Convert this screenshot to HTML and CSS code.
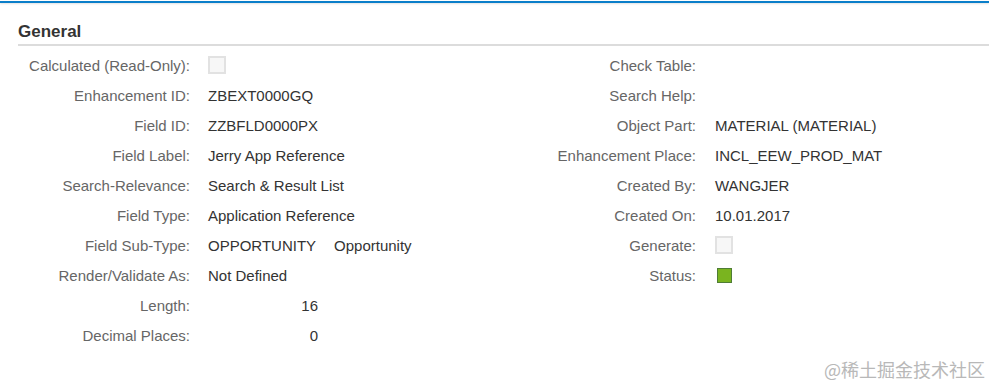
FILE: index.html
```html
<!DOCTYPE html>
<html>
<head>
<meta charset="utf-8">
<link rel="stylesheet" href="styles.css">
</head>
<body>
<div class="topbar"></div>
<div class="panel">
  <h2 class="title">General</h2>
  <div class="form">
    <div class="col col-left">
      <div class="label">Calculated (Read-Only):</div><div class="value"><span class="checkbox"></span></div>
      <div class="label">Enhancement ID:</div><div class="value">ZBEXT0000GQ</div>
      <div class="label">Field ID:</div><div class="value">ZZBFLD0000PX</div>
      <div class="label">Field Label:</div><div class="value">Jerry App Reference</div>
      <div class="label">Search-Relevance:</div><div class="value">Search &amp; Result List</div>
      <div class="label">Field Type:</div><div class="value">Application Reference</div>
      <div class="label">Field Sub-Type:</div><div class="value"><span class="code">OPPORTUNITY</span><span class="desc">Opportunity</span></div>
      <div class="label">Render/Validate As:</div><div class="value">Not Defined</div>
      <div class="label">Length:</div><div class="value"><span class="num">16</span></div>
      <div class="label">Decimal Places:</div><div class="value"><span class="num">0</span></div>
    </div>
    <div class="col col-right">
      <div class="label">Check Table:</div><div class="value"></div>
      <div class="label">Search Help:</div><div class="value"></div>
      <div class="label">Object Part:</div><div class="value">MATERIAL (MATERIAL)</div>
      <div class="label">Enhancement Place:</div><div class="value">INCL_EEW_PROD_MAT</div>
      <div class="label">Created By:</div><div class="value">WANGJER</div>
      <div class="label">Created On:</div><div class="value">10.01.2017</div>
      <div class="label">Generate:</div><div class="value"><span class="checkbox"></span></div>
      <div class="label">Status:</div><div class="value"><span class="status"></span></div>
    </div>
  </div>
</div>
<div class="watermark">@稀土掘金技术社区</div>
</body>
</html>
```
FILE: styles.css
```css
html, body {
  margin: 0;
  padding: 0;
  background: #fff;
  width: 989px;
  height: 384px;
  overflow: hidden;
  font-family: "Liberation Sans", Arial, sans-serif;
  position: relative;
}
.topbar {
  margin-top: 1px;
  height: 2px;
  background: #0a7ec9;
  box-shadow: 0 1px 2px rgba(0,0,0,0.12);
}
.panel {
  padding-left: 18px;
}
.title {
  margin: 0;
  padding-top: 17px;
  height: 24px;
  line-height: 24px;
  font-size: 17px;
  font-weight: bold;
  color: #333;
  border-bottom: 2px solid #dcdcdc;
  box-sizing: content-box;
}
.form {
  display: flex;
  padding-top: 4px;
}
.col {
  display: grid;
  grid-auto-rows: 30px;
  align-items: center;
  align-content: start;
  font-size: 15px;
}
.col-left {
  grid-template-columns: 172px 1fr;
  column-gap: 18px;
  width: 487px;
}
.col-right {
  grid-template-columns: 191px 1fr;
  column-gap: 19px;
  flex: 1;
}
.label {
  text-align: right;
  color: #666;
  white-space: nowrap;
}
.value {
  color: #333;
  white-space: nowrap;
  display: flex;
  align-items: center;
}
.checkbox {
  display: inline-block;
  width: 14px;
  height: 14px;
  border: 2px solid #e2e2e2;
  background: #f7f7f7;
}
.status {
  display: inline-block;
  width: 13px;
  height: 13px;
  margin-left: 2px;
  background: #7ab41f;
  border: 1px solid #4f7d35;
}
.code {
  display: inline-block;
}
.desc {
  margin-left: 18px;
}
.num {
  display: inline-block;
  width: 110px;
  text-align: right;
}
.watermark {
  position: absolute;
  right: 4px;
  top: 358px;
  font-family: "Noto Sans CJK SC", sans-serif;
  font-size: 18px;
  line-height: 22px;
  color: #b8b8b8;
}
```
